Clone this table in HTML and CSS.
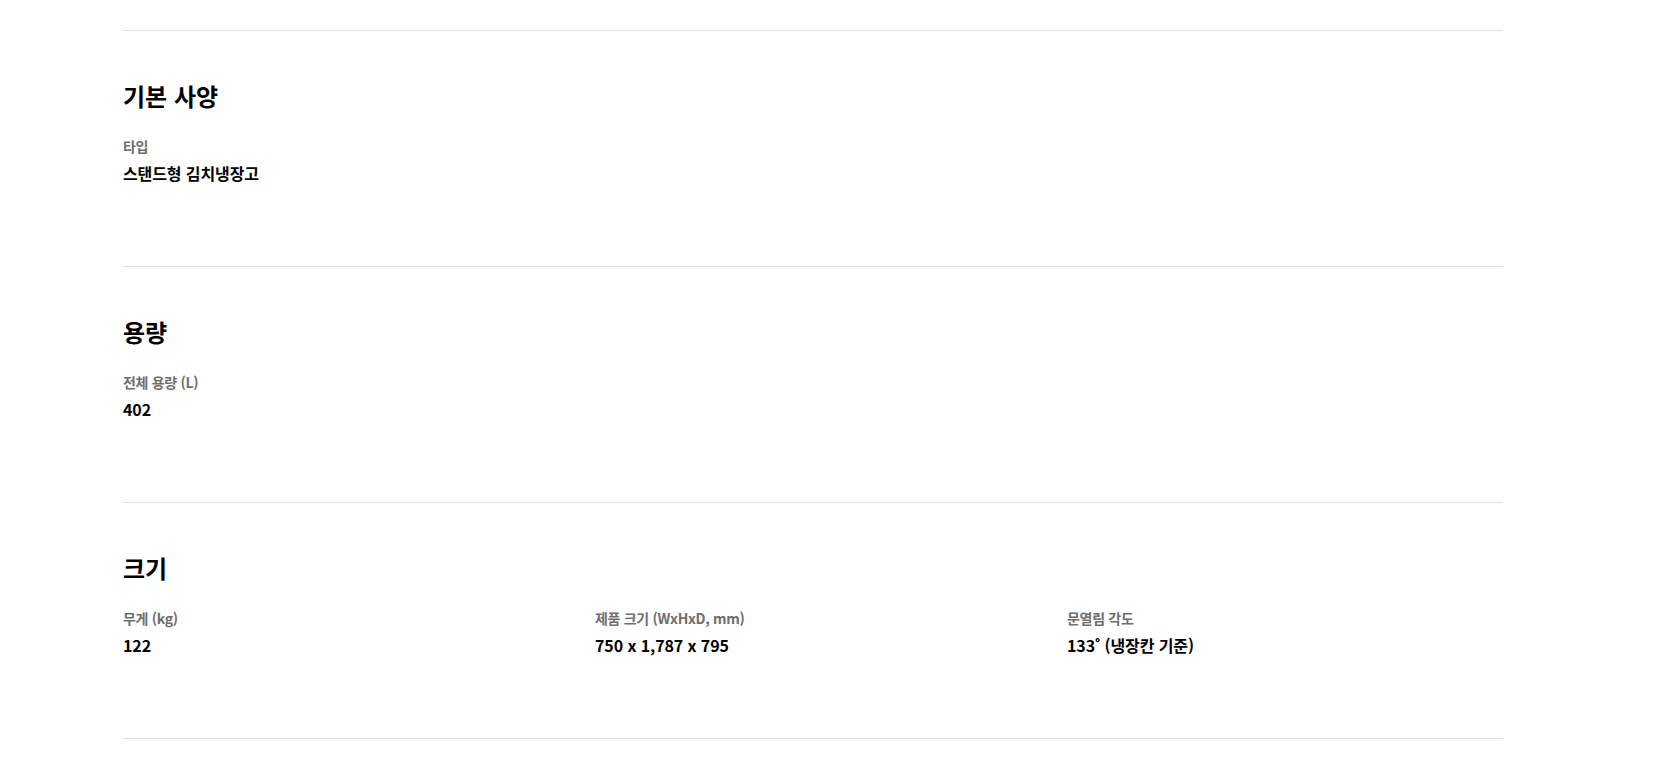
FILE: index.html
```html
<!DOCTYPE html>
<html lang="ko">
<head>
<meta charset="utf-8">
<title>스펙</title>
<link rel="stylesheet" href="styles.css">
</head>
<body>
<main class="specs">
  <section class="spec-section">
    <h2 class="spec-title">기본 사양</h2>
    <dl class="spec-grid">
      <div class="spec-item">
        <dt class="spec-label">타입</dt>
        <dd class="spec-value">스탠드형 김치냉장고</dd>
      </div>
    </dl>
  </section>
  <section class="spec-section">
    <h2 class="spec-title">용량</h2>
    <dl class="spec-grid">
      <div class="spec-item">
        <dt class="spec-label">전체 용량 (L)</dt>
        <dd class="spec-value">402</dd>
      </div>
    </dl>
  </section>
  <section class="spec-section">
    <h2 class="spec-title">크기</h2>
    <dl class="spec-grid">
      <div class="spec-item">
        <dt class="spec-label">무게 (kg)</dt>
        <dd class="spec-value">122</dd>
      </div>
      <div class="spec-item">
        <dt class="spec-label">제품 크기 (WxHxD, mm)</dt>
        <dd class="spec-value">750 x 1,787 x 795</dd>
      </div>
      <div class="spec-item">
        <dt class="spec-label">문열림 각도</dt>
        <dd class="spec-value">133˚ (냉장칸 기준)</dd>
      </div>
    </dl>
  </section>
  <div class="spec-end"></div>
</main>
</body>
</html>
```

FILE: styles.css
```css
* { box-sizing: border-box; }
html, body { margin: 0; padding: 0; background: #fff; }
body {
  font-family: "Noto Sans CJK KR", "Noto Sans", sans-serif;
  color: #000;
  overflow: hidden;
}
.specs {
  width: 1380px;
  margin-left: 123px;
  padding-top: 30px;
}
.spec-section {
  border-top: 1px solid #dfdfdf;
  height: 236px;
  padding-top: 48px;
}
.spec-title {
  margin: 0;
  font-size: 24px;
  line-height: 34px;
  font-weight: 700;
}
.spec-grid {
  margin: 23px 0 0;
  display: grid;
  grid-template-columns: repeat(3, 1fr);
  column-gap: 36px;
}
.spec-item { margin: 0; }
.spec-label {
  font-size: 14px;
  line-height: 20px;
  font-weight: 700;
  color: #6e6e6e;
  letter-spacing: -0.3px;
}
.spec-value {
  margin: 5px 0 0;
  font-size: 16px;
  line-height: 24px;
  font-weight: 700;
  letter-spacing: -0.1px;
}
.spec-end {
  border-top: 1px solid #dfdfdf;
}
```
